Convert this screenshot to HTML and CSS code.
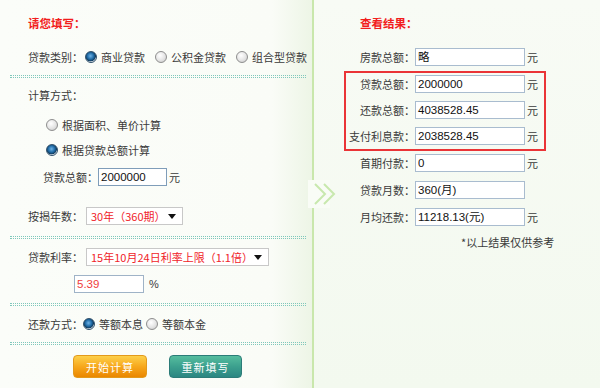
FILE: index.html
```html
<!DOCTYPE html>
<html lang="zh-CN">
<head>
  <meta charset="UTF-8" />
  <title>房贷计算器</title>
  <link rel="stylesheet" href="styles.css">
</head>
<body>
  <div class="calc">
    <section class="form-panel">
      <h2 class="title">请您填写：</h2>
      <div class="row row-type">
        <span class="label">贷款类别：</span>
        <span class="radio checked"></span><span class="opt">商业贷款</span>
        <span class="radio"></span><span class="opt">公积金贷款</span>
        <span class="radio"></span><span class="opt">组合型贷款</span>
      </div>
      <div class="divider div-type"></div>
      <div class="row row-method"><span class="label">计算方式：</span></div>
      <div class="row row-sub first"><span class="radio"></span><span class="opt">根据面积、单价计算</span></div>
      <div class="row row-sub"><span class="radio checked"></span><span class="opt">根据贷款总额计算</span></div>
      <div class="row row-amount">
        <span class="label">贷款总额：</span>
        <span class="field focus">2000000</span><span class="unit">元</span>
      </div>
      <div class="row row-years">
        <span class="label">按揭年数：</span>
        <span class="select select-years">30年（360期）<i class="caret"></i></span>
      </div>
      <div class="divider div-years"></div>
      <div class="row row-rate">
        <span class="label">贷款利率：</span>
        <span class="select select-rate">15年10月24日利率上限（1.1倍）<i class="caret"></i></span>
      </div>
      <div class="row row-pct">
        <span class="field red">5.39</span><span class="unit pct">%</span>
      </div>
      <div class="divider div-pct"></div>
      <div class="row row-repay">
        <span class="label">还款方式：</span>
        <span class="radio checked"></span><span class="opt tight">等额本息</span>
        <span class="radio"></span><span class="opt">等额本金</span>
      </div>
      <div class="divider div-repay"></div>
      <div class="buttons">
        <button class="btn btn-calc">开始计算</button>
        <button class="btn btn-reset">重新填写</button>
      </div>
    </section>

    <svg class="arrow" width="34" height="32" viewBox="0 0 34 32">
      <rect x="2" y="2" width="22" height="28" fill="#f9fcf6"/>
      <polyline points="9,6 19,16 9,26" fill="none" stroke="#c8e8ae" stroke-width="2"/>
      <polyline points="18,6 28,16 18,26" fill="none" stroke="#c8e8ae" stroke-width="2"/>
    </svg>

    <section class="result-panel">
      <h2 class="title">查看结果：</h2>
      <div class="res-row top">
        <span class="res-label">房款总额：</span><span class="field">略</span><span class="unit">元</span>
      </div>
      <div class="highlight">
        <div class="res-row">
          <span class="res-label">贷款总额：</span><span class="field">2000000</span><span class="unit">元</span>
        </div>
        <div class="res-row">
          <span class="res-label">还款总额：</span><span class="field">4038528.45</span><span class="unit">元</span>
        </div>
        <div class="res-row">
          <span class="res-label">支付利息款：</span><span class="field">2038528.45</span><span class="unit">元</span>
        </div>
      </div>
      <div class="res-row after">
        <span class="res-label">首期付款：</span><span class="field">0</span><span class="unit">元</span>
      </div>
      <div class="res-row">
        <span class="res-label">贷款月数：</span><span class="field">360(月)</span>
      </div>
      <div class="res-row">
        <span class="res-label">月均还款：</span><span class="field">11218.13(元)</span><span class="unit">元</span>
      </div>
      <p class="note">*以上结果仅供参考</p>
    </section>
  </div>
</body>
</html>
```

FILE: styles.css
```css
* {
  box-sizing: border-box;
  margin: 0;
  padding: 0;
}
body {
  font-family: "Noto Sans CJK SC", "Liberation Sans", sans-serif;
  font-size: 11px;
  color: #3a3a3a;
  background: #f6faf2;
}
.calc {
  position: relative;
  display: flex;
  width: 600px;
  height: 388px;
  overflow: hidden;
}
.form-panel {
  width: 314px;
  flex-shrink: 0;
  background: linear-gradient(to right, #fbfdf9 0, #fafcf7 272px, #edf5e6 312px);
  border-right: 2px solid #c9e7ac;
  padding-left: 28px;
}
.result-panel {
  flex-grow: 1;
  background: linear-gradient(to bottom, #f8fbf5, #f3f9ef);
}
.title {
  font-size: 11.5px;
  font-weight: 700;
  color: #f21d1d;
  margin-top: 14px;
  line-height: 18px;
  height: 18px;
}
.row {
  display: flex;
  align-items: center;
  height: 20px;
  white-space: nowrap;
}
.row-type { margin-top: 15px; }
.row-method { margin-top: 7px; }
.row-sub { margin-top: 7px; padding-left: 18px; height: 18px; }
.row-sub.first { margin-top: 11px; }
.row-amount { margin-top: 8px; padding-left: 15px; }
.row-years { margin-top: 19px; }
.row-rate { margin-top: 8px; }
.row-pct { margin-top: 7px; padding-left: 46px; }
.row-repay { margin-top: 8px; }
.label { color: #3a3a3a; }
.row-years .label, .row-rate .label { width: 58px; }
.row-type .label { margin-right: 2px; }
.opt { margin-left: 4px; margin-right: 10px; }
.opt.tight { margin-right: 3px; }
.radio {
  display: inline-block;
  flex-shrink: 0;
  width: 12px;
  height: 12px;
  border-radius: 50%;
  border: 1px solid #8e8e8e;
  background: radial-gradient(circle at 40% 35%, #ffffff 0, #e4e4e4 55%, #c4c4c4 100%);
}
.radio.checked {
  border-color: #2f4f6a;
  background: radial-gradient(circle at 45% 40%, #6fb3e6 0, #1f6aa5 40%, #123c5e 62%, #dfe7ee 70%, #c9d3dc 100%);
}
.divider {
  margin-left: -18px;
  width: 296px;
  height: 3px;
  border-top: 1px dotted #7fc8bb;
  border-bottom: 1px dotted #7fc8bb;
}
.div-type { margin-top: 8px; }
.div-years { margin-top: 10px; }
.div-pct { margin-top: 9px; }
.div-repay { margin-top: 8px; }
.field {
  display: inline-block;
  flex-shrink: 0;
  width: 110px;
  height: 18px;
  line-height: 16px;
  padding-left: 2px;
  background: #fff;
  border: 1px solid #a9bccf;
  font-family: "Liberation Sans", "Noto Sans CJK SC", sans-serif;
  font-size: 11.5px;
  color: #111;
}
.row-amount .field { width: 69px; }
.field.focus { border-color: #7f9db9; }
.field.red { color: #f03c3c; width: 70px; border-color: #9fb3c7; }
.unit { margin-left: 2px; }
.unit.pct { margin-left: 5px; font-family: "Liberation Sans", sans-serif; }
.select {
  position: relative;
  display: inline-block;
  height: 18px;
  line-height: 16px;
  padding-left: 4px;
  background: #fff;
  border: 1px solid #c8c8c8;
  color: #f0242a;
}
.select-years { width: 97px; }
.select-rate { width: 183px; }
.caret {
  position: absolute;
  right: 6px;
  top: 6px;
  width: 0;
  height: 0;
  border-left: 4px solid transparent;
  border-right: 4px solid transparent;
  border-top: 5px solid #111;
}
.buttons {
  display: flex;
  gap: 22px;
  margin-top: 10px;
  padding-left: 45px;
}
.btn {
  height: 23px;
  border-radius: 4px;
  color: #fff;
  font-family: "Noto Sans CJK SC", sans-serif;
  font-size: 11px;
  letter-spacing: 1px;
  cursor: pointer;
}
.btn-calc {
  width: 74px;
  border: 1px solid #e39a1c;
  background: linear-gradient(to bottom, #fdd04a 0, #f7a81d 50%, #ea8700 100%);
}
.btn-reset {
  width: 73px;
  border: 1px solid #2c7c78;
  background: linear-gradient(to bottom, #56bd9e 0, #3ca08e 50%, #2b8682 100%);
}
.arrow {
  position: absolute;
  left: 306px;
  top: 178px;
}
.result-panel .title { margin-left: 46px; }
.res-row {
  display: flex;
  align-items: center;
  height: 18px;
  margin-top: 9px;
  margin-left: 32px;
  white-space: nowrap;
}
.res-row.top { margin-top: 16px; }
.res-row.after { margin-top: 3px; }
.res-label {
  width: 69px;
  text-align: right;
}
.highlight {
  margin-left: 30px;
  margin-top: 5px;
  width: 202px;
  border: 2px solid #ea3437;
  padding: 2px 0 4px;
}
.highlight .res-row { margin-left: 0; }
.highlight .res-row:first-child { margin-top: 0; }
.highlight .res-row + .res-row { margin-top: 8px; }
.note {
  margin-top: 7px;
  padding-left: 147px;
  line-height: 18px;
}
```
